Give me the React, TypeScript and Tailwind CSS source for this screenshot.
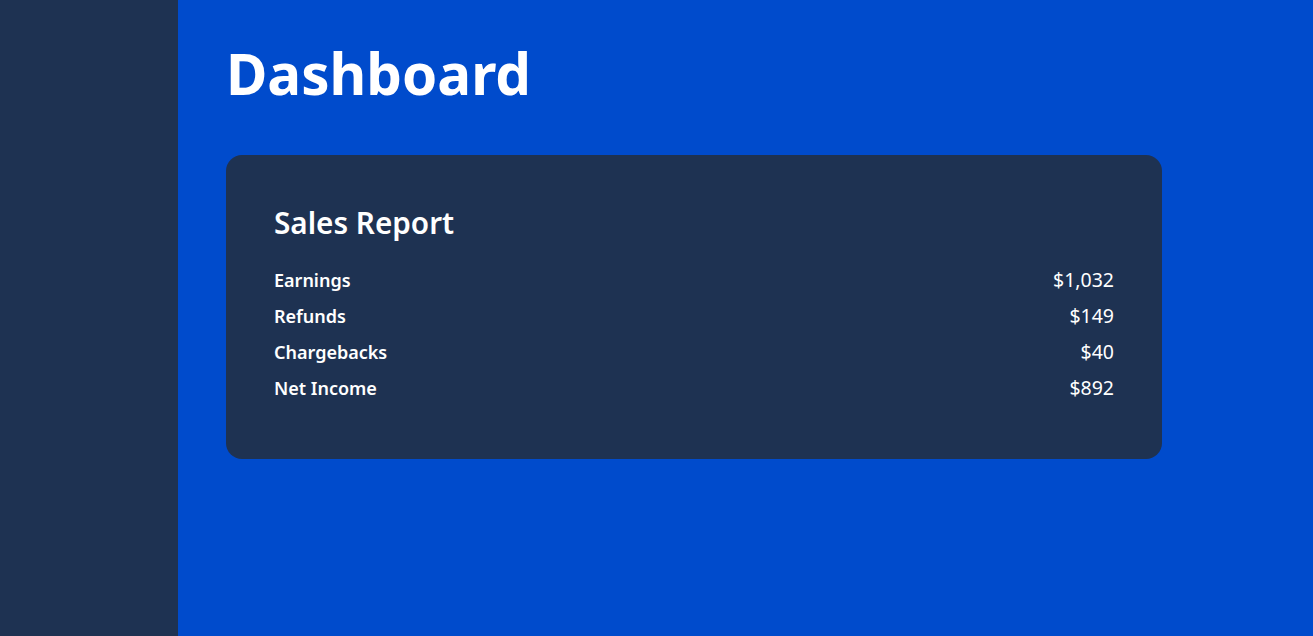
import React from "react";

const rows = [
  { label: "Earnings", value: "$1,032" },
  { label: "Refunds", value: "$149" },
  { label: "Chargebacks", value: "$40" },
  { label: "Net Income", value: "$892" },
];

export default function App() {
  return (
    <div
      className="flex h-[636px] w-full"
      style={{ fontFamily: '"Noto Sans", "Open Sans", sans-serif' }}
    >
      <aside className="w-[178px] shrink-0 bg-[#1e3252]" />
      <main className="flex-1 bg-[#004bcc] px-12 pt-[34px]">
        <h1 className="text-[56.5px] font-bold leading-[80px] text-white">Dashboard</h1>
        <section className="mt-[41px] w-[936px] rounded-2xl bg-[#1e3252] px-12 pt-[48px] pb-[53px] text-white">
          <h2 className="text-[29.7px] font-semibold leading-[40px]">Sales Report</h2>
          <div className="mt-[19px] flex flex-col">
            {rows.map((r) => (
              <div key={r.label} className="flex h-9 items-center justify-between">
                <span className="text-[18px] font-semibold">{r.label}</span>
                <span className="text-[19.5px]">{r.value}</span>
              </div>
            ))}
          </div>
        </section>
      </main>
    </div>
  );
}
